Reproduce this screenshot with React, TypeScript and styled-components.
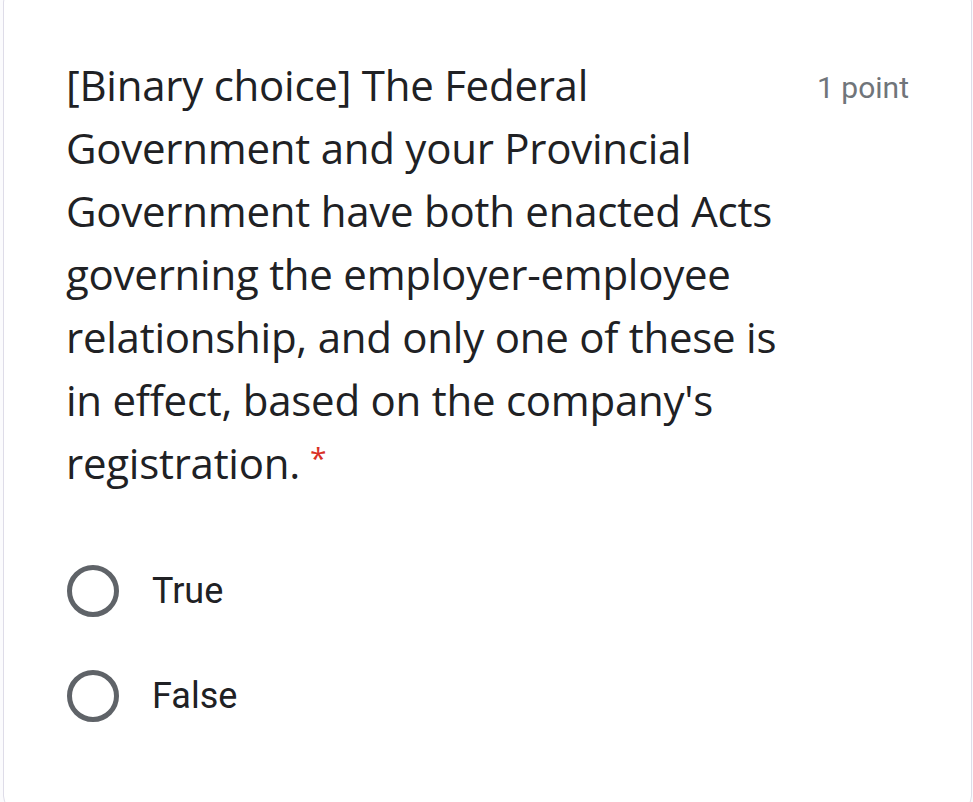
import React from 'react';
import styled, { createGlobalStyle } from 'styled-components';

const GlobalStyle = createGlobalStyle`
  html, body {
    margin: 0;
    padding: 0;
    background: #fbfbfd;
  }
  body {
    overflow: hidden;
  }
`;

const Page = styled.div`
  padding: 0 1px 0 3px;
  margin-top: -12px;
`;

const Card = styled.div`
  box-sizing: border-box;
  height: 822px;
  background: #ffffff;
  border: 1px solid #dedce8;
  border-radius: 14px;
  padding: 64px 62px 0 62px;
`;

const Header = styled.div`
  display: flex;
  justify-content: space-between;
  align-items: flex-start;
`;

const Title = styled.div`
  width: 750px;
  font-family: 'Open Sans', 'Noto Sans', sans-serif;
  font-size: 42px;
  line-height: 63px;
  letter-spacing: -0.25px;
  color: #202124;
`;

const Required = styled.span`
  display: inline-block;
  margin-left: 10px;
  color: #d93025;
  font-size: 30px;
  line-height: 30px;
  vertical-align: 10px;
`;

const Points = styled.div`
  margin-top: 15px;
  font-family: Roboto, 'Liberation Sans', sans-serif;
  font-size: 30px;
  line-height: 40px;
  color: #70757a;
`;

const Options = styled.div`
  margin-top: 44px;
  display: flex;
  flex-direction: column;
`;

const OptionRow = styled.label`
  display: flex;
  align-items: center;
  height: 105px;
  gap: 33px;
  cursor: pointer;
`;

const Radio = styled.span`
  box-sizing: border-box;
  width: 52px;
  height: 52px;
  margin-left: 1px;
  border: 5px solid #5f6368;
  border-radius: 50%;
  flex-shrink: 0;
`;

const OptionText = styled.span`
  font-family: Roboto, 'Liberation Sans', sans-serif;
  font-size: 36px;
  color: #202124;
`;

const options = ['True', 'False'];

const App: React.FC = () => {
  return (
    <>
      <GlobalStyle />
      <Page>
        <Card>
          <Header>
            <Title>
              [Binary choice] The Federal Government and your Provincial Government have both
              enacted Acts governing the employer-employee relationship, and only one of these is
              in effect, based on the company's registration.
              <Required>*</Required>
            </Title>
            <Points>1 point</Points>
          </Header>
          <Options>
            {options.map((opt) => (
              <OptionRow key={opt}>
                <Radio />
                <OptionText>{opt}</OptionText>
              </OptionRow>
            ))}
          </Options>
        </Card>
      </Page>
    </>
  );
};

export default App;
